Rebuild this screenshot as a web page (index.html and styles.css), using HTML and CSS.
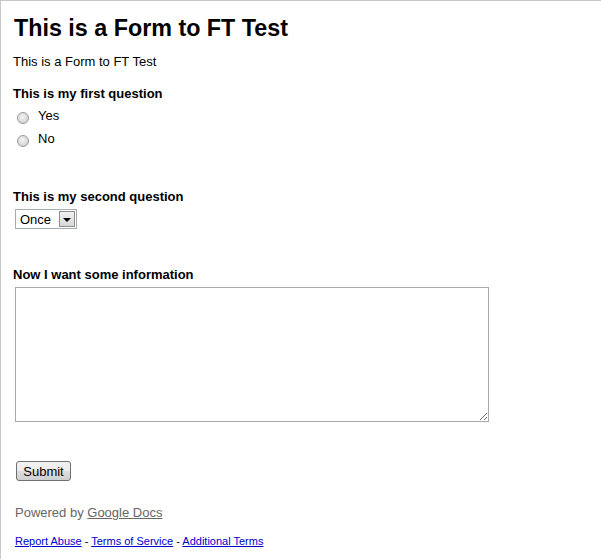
FILE: index.html
```html
<!DOCTYPE html>
<html>
<head>
<meta charset="utf-8">
<title>This is a Form to FT Test</title>
<link rel="stylesheet" href="styles.css">
</head>
<body>
<div class="frame">
  <h1 class="title">This is a Form to FT Test</h1>
  <p class="desc">This is a Form to FT Test</p>
  <form class="form">
    <div class="item item-radio">
      <div class="label">This is my first question</div>
      <div class="choices">
        <label class="choice"><input type="radio" name="q1" class="radio"><span>Yes</span></label>
        <label class="choice"><input type="radio" name="q1" class="radio"><span>No</span></label>
      </div>
    </div>
    <div class="item item-select">
      <div class="label">This is my second question</div>
      <div class="select-box">
        <select class="select"><option>Once</option></select>
        <span class="select-btn"><span class="select-arrow"></span></span>
      </div>
    </div>
    <div class="item item-text">
      <div class="label">Now I want some information</div>
      <textarea class="textarea"></textarea>
    </div>
    <div class="actions">
      <button type="button" class="submit">Submit</button>
    </div>
  </form>
  <div class="powered">Powered by <a href="#" class="powered-link">Google Docs</a></div>
  <div class="footer"><a href="#">Report Abuse</a> - <a href="#">Terms of Service</a> - <a href="#">Additional Terms</a></div>
</div>
</body>
</html>
```
FILE: styles.css
```css
html, body {
  margin: 0;
  padding: 0;
  background: #fff;
}
body {
  font-family: "Liberation Sans", Arial, sans-serif;
  font-size: 13px;
  color: #000;
}
.frame {
  border-top: 1px solid #c8c8c8;
  border-left: 1px solid #c8c8c8;
  min-height: 559px;
  box-sizing: border-box;
  padding: 13px 12px 0 12px;
}
.title {
  font-size: 23.3px;
  line-height: 28px;
  font-weight: bold;
  margin: 0 0 0 1px;
}
.desc {
  margin: 12px 0 0 0;
  line-height: 15px;
}
.form {
  margin: 0;
}
.label {
  font-weight: bold;
  line-height: 15px;
}
.item-radio {
  margin-top: 17px;
}
.choices {
  margin-top: 4px;
}
.choice {
  display: flex;
  align-items: center;
  height: 23px;
  margin-left: 4px;
}
.choice span {
  line-height: 15px;
  margin-top: -2px;
}
.radio {
  appearance: none;
  -webkit-appearance: none;
  width: 12px;
  height: 12px;
  margin: 3px 9px 0 0;
  border-radius: 50%;
  border: 1px solid #9a9a9a;
  box-sizing: border-box;
  background: radial-gradient(circle at 45% 40%, #f4f4f4 0%, #dcdcdc 55%, #c4c4c4 100%);
}
.item-select {
  margin-top: 38px;
}
.select-box {
  display: inline-flex;
  align-items: center;
  margin: 5px 0 0 2px;
  width: 62px;
  height: 20px;
  box-sizing: border-box;
  border: 1px solid #a5acb2;
  background: #fff;
}
.select {
  appearance: none;
  -webkit-appearance: none;
  border: 0;
  outline: 0;
  background: transparent;
  font-family: inherit;
  font-size: 13px;
  padding: 0 0 0 4px;
  margin: 0;
  flex: 1;
  min-width: 0;
  height: 18px;
  color: #000;
}
.select-btn {
  width: 16px;
  height: 16px;
  margin-right: 1px;
  box-sizing: border-box;
  border: 1px solid #8e8e8e;
  background: linear-gradient(#f2f2f2, #d6d6d6);
  display: flex;
  align-items: center;
  justify-content: center;
}
.select-arrow {
  width: 0;
  height: 0;
  border-left: 4px solid transparent;
  border-right: 4px solid transparent;
  border-top: 4px solid #000;
  margin-top: 1px;
}
.item-text {
  margin-top: 38px;
}
.textarea {
  display: block;
  margin: 5px 0 0 2px;
  width: 474px;
  height: 135px;
  box-sizing: border-box;
  border: 1px solid #a9a9a9;
  font-family: inherit;
  font-size: 13px;
  resize: both;
  padding: 2px;
}
.actions {
  margin-top: 39px;
}
.submit {
  margin: 0 0 0 3px;
  width: 55px;
  height: 20px;
  padding: 0;
  font-family: inherit;
  font-size: 13px;
  color: #000;
  border: 1px solid #707070;
  border-radius: 3px;
  background: linear-gradient(#f2f2f2 0%, #ebebeb 50%, #dddddd 51%, #cfcfcf 100%);
}
.powered {
  margin: 24px 0 0 2px;
  color: #666;
  font-size: 13px;
  line-height: 15px;
}
.powered-link {
  color: #666;
  text-decoration: underline;
}
.footer {
  margin: 15px 0 0 2px;
  font-size: 11px;
  line-height: 13px;
}
.footer a {
  color: #00c;
}
```
